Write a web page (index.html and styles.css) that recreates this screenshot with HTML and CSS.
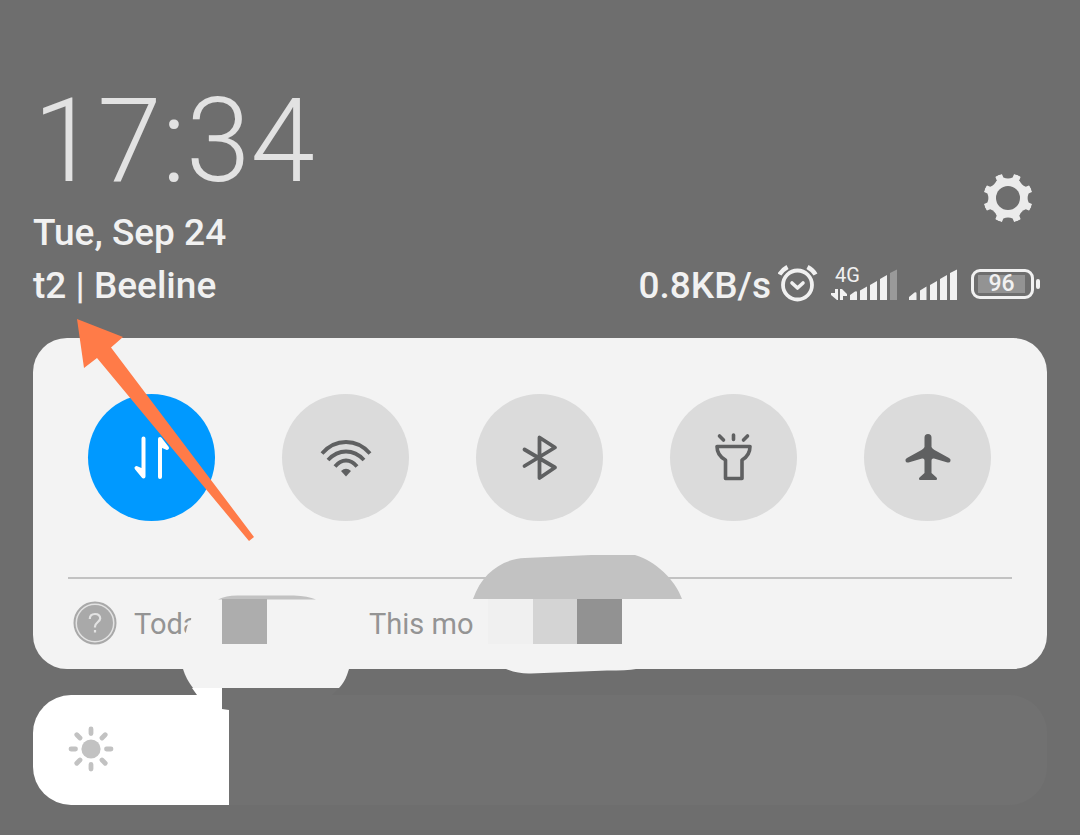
FILE: index.html
```
<!DOCTYPE html>
<html lang="en">
<head>
    <meta charset="UTF-8">
    <meta name="viewport" content="width=device-width, initial-scale=1">
    <title>Control center</title>
    <link rel="stylesheet" href="styles.css">
</head>
<body>
    <header class="header">
        <div class="header-top">
            <div>
                <div class="clock">17:34</div>
                <div class="date">Tue, Sep 24</div>
            </div>
            <button class="settings" type="button" aria-label="Settings">
                <svg width="50" height="50" viewBox="-25 -25 50 50">
                    <defs>
                        <path id="notch" d="M26-7L20.6-4.6Q18.6 0 20.6 4.6L26 7Z"/>
                        <mask id="gear" maskUnits="userSpaceOnUse" x="-25" y="-25" width="50" height="50">
                            <circle r="24.8" fill="#fff"/>
                            <circle r="12"/>
                            <use href="#notch"/>
                            <use href="#notch" transform="rotate(45)"/>
                            <use href="#notch" transform="rotate(90)"/>
                            <use href="#notch" transform="rotate(135)"/>
                            <use href="#notch" transform="rotate(180)"/>
                            <use href="#notch" transform="rotate(225)"/>
                            <use href="#notch" transform="rotate(270)"/>
                            <use href="#notch" transform="rotate(315)"/>
                        </mask>
                    </defs>
                    <circle r="25" fill="#ebebeb" mask="url(#gear)"/>
                </svg>
            </button>
        </div>
        <div class="status">
            <div class="carrier">t2 | Beeline</div>
            <div class="status-icons">
                <span class="speed">0.8KB/s</span>
                <svg class="alarm" width="40" height="40" viewBox="0 0 40 40" fill="none" stroke="#f1f1f1" stroke-linecap="round">
                    <circle cx="19.500" cy="21" r="14.5" stroke-width="3.8"/>
                    <path d="M14 19l5.5 5 5.5-5" stroke-width="3.6" stroke-linejoin="round"/>
                    <path d="M1.500 10.500Q4 6 9.500 3M37.500 10.500Q35 6 29.500 3" stroke-width="4.400" stroke-linecap="butt"/>
                </svg>
                <svg class="signal-4g" width="67" height="40" viewBox="0 0 67 40" fill="#f1f1f1">
                    <text class="network" x="4" y="18">4G</text>
                    <path d="M4 25h3v11H6L0 31v-2h4zM9 36V25h2l5 5v2h-4v4z"/>
                    <path d="M19 31l5-3.500q2-1 2 1V36h-7zM29 26.500l7-4V36h-7zM39 21l7-4v19h-7zM49 15l7-4v25h-7z"/>
                    <path d="M59 9l7-3.500V36h-7z" fill="#9a9a9a"/>
                </svg>
                <svg class="signal" width="48" height="40" viewBox="0 0 48 40" fill="#f1f1f1">
                    <path d="M0 33l5.500-4.500q2-1 2 1V36H0zM11 26.500l6.500-4V36H11zM21 21l7-4v19h-7zM31 15l7-4v25h-7zM41 9l7-3.500V36h-7z"/>
                </svg>
                <div class="battery"><span class="battery-level">96</span></div>
            </div>
        </div>
    </header>

    <main>
        <section class="panel">
            <div class="toggles">
                <button class="toggle toggle-on" type="button" aria-label="Mobile data">
                    <svg width="56" height="56" viewBox="0 0 56 56" fill="none" stroke="#fff" stroke-width="4" stroke-linecap="round" stroke-linejoin="round">
                        <path d="M19.500 8.500v38l-7-8.500 7 3M36 47V9l7 9-7-3"/>
                    </svg>
                </button>
                <button class="toggle" type="button" aria-label="Wi-Fi">
                    <svg width="56" height="56" viewBox="0 0 56 56" fill="none" stroke="#5f6061" stroke-width="3.8">
                        <path d="M4 23.500Q14 12 28 12T52 23.500M10 30Q18 21.500 28 21.500T46 30M17 36.500Q22 30.500 28 30.500T39 36.500"/>
                        <path d="M28 46.500l-5-5.500q5-4.500 10 0z" fill="#5f6061" stroke="none"/>
                    </svg>
                </button>
                <button class="toggle" type="button" aria-label="Bluetooth">
                    <svg width="56" height="56" viewBox="0 0 56 56" fill="none" stroke="#5f6061" stroke-width="3.800" stroke-linecap="round" stroke-linejoin="round">
                        <path d="M12.500 19.500L43 37.500 27.500 48V7.500L43 17.500 12.500 36"/>
                    </svg>
                </button>
                <button class="toggle" type="button" aria-label="Flashlight">
                    <svg width="56" height="56" viewBox="0 0 56 56" fill="none" stroke="#5f6061" stroke-width="3.600" stroke-linecap="round" stroke-linejoin="round">
                        <path d="M11 16.500h33q0 9-8 13.500v18.500H19.500V30q-8.500-4.500-8.500-13.500z"/>
                        <path d="M27.500 5v4.500M13.500 6l4 4M41.500 6l-4 4"/>
                    </svg>
                </button>
                <button class="toggle" type="button" aria-label="Airplane mode">
                    <svg width="56" height="56" viewBox="0 0 56 56" fill="#5f6061">
                        <path d="M24.500 7.500a3.500 3.500 0 0 1 7 0V17q1 2 3 3l14.500 8q2 1 1.500 3t-3 1.500L34 28.500q-2.500-.5-2.500 2V43l5 4.500q1.500 2.500-1 2.500h-15q-2.500 0-1-2.500l5-4.500V30.500q0-2.500-2.500-2L8.500 32.500q-2.500.5-3-1.500T7 28l14.500-8q2-1 3-3z"/>
                    </svg>
                </button>
            </div>
            <div class="usage">
                <svg class="usage-icon" width="44" height="44" viewBox="0 0 44 44">
                    <circle cx="22" cy="22" r="20.500" fill="#e3e3e3" stroke="#a9a9a9" stroke-width="2"/>
                    <circle cx="22" cy="22" r="18" fill="#a9a9a9"/>
                    <path d="M16.800 18q0-5 5.200-5t5.200 4.600c0 3-5.200 4-5.200 7.900v1M22 29v2.500" fill="none" stroke="#e3e3e3" stroke-width="2.200"/>
                </svg>
                <span class="usage-today">Toda</span>
                <span>This mo</span>
            </div>

            <!-- covered usage values -->
            <svg class="cover cover-today" width="170" height="120" viewBox="0 0 170 120">
                <path d="M10 14L35 6h100v67H1V46L4 36Q5 28 9 24z" fill="#f3f3f3"/>
                <path d="M1 73h166l-2 6q-3 8-8 13H11Q4 83 1 73z" fill="#f3f3f3"/>
                <path d="M10 92h30v23H22L15 99z" fill="#fff"/>
                <path d="M40 92h117l-7 7H47v15l-7-1z" fill="#717171"/>
                <path d="M36 3.500Q44-.5 55-.5H112Q126 0 134 3.500z" fill="#c2c2c2"/>
                <path d="M40 3h45v45H40z" fill="#adadad"/>
            </svg>
            <svg class="cover cover-month" width="210" height="120" viewBox="0 0 210 120">
                <path d="M0 44C9 18 29 4 52 3L118 0h44C182 6 202 24 209 44z" fill="#c2c2c2"/>
                <path d="M15 44h45v45H15z" fill="#f0f0f0"/>
                <path d="M60 44h44v45H60z" fill="#d4d4d4"/>
                <path d="M104 44h45v45h-45z" fill="#929292"/>
                <path d="M33 114q12 5 25 4.500l76-3q20 0 29-1.500z" fill="#f3f3f3"/>
            </svg>
            <svg class="arrow" width="180" height="224" viewBox="0 0 180 224">
                <path d="M0 0L46 18 34 28.500 177 218 172 222 20 39 7 49z" fill="#ff7b48"/>
            </svg>
        </section>

        <div class="brightness">
            <input class="brightness-range" type="range" min="0" max="1000" value="193" aria-label="Brightness">
            <svg class="sun" width="48" height="48" viewBox="-24 -24 48 48" fill="#c2c2c2" stroke="#c2c2c2" stroke-width="4.800" stroke-linecap="round">
                <circle r="9.600" stroke="none"/>
                <path d="M0-20v4.500M0 20v-4.500M-20 0h4.500M20 0h-4.500M-14.200-14.200l3.200 3.200M14.200-14.200l-3.200 3.200M-14.200 14.200l3.200-3.200M14.200 14.200l-3.200-3.200"/>
            </svg>
        </div>
    </main>
</body>
</html>
```
FILE: styles.css
```
body {
    margin: 0;
    padding: 76px 33px 30px;
    background: #6e6e6e;
    color: #f1f1f1;
    font-family: Roboto, sans-serif;
}
button {
    padding: 0;
    border: 0;
    background: none;
    cursor: pointer;
}
svg {
    display: block;
}
.header-top {
    display: flex;
    justify-content: space-between;
    align-items: flex-end;
}
.clock {
    font-size: 116px;
    font-weight: 300;
    line-height: 130px;
    color: #e2e2e2;
}
.date, .carrier, .speed {
    font-size: 37px;
    font-weight: 500;
    line-height: 53px;
    white-space: nowrap;
}
.settings {
    margin: 0 14px 36px 0;
}
.status {
    display: flex;
    justify-content: space-between;
    align-items: center;
}
.status-icons {
    display: flex;
    align-items: center;
    padding-right: 7px;
}
.status-icons svg, .battery {
    margin-bottom: 4px;
}
.alarm {
    margin: 0 13px 0 7px;
}
.signal {
    margin: 0 14px 0 11px;
}
.network {
    font-size: 20px;
}
.battery {
    position: relative;
    box-sizing: border-box;
    width: 63px;
    height: 30px;
    margin-right: 6px;
    padding: 3px 4px;
    border: 3px solid #f1f1f1;
    border-radius: 9px;
}
.battery::after {
    content: "";
    position: absolute;
    top: 7px;
    right: -9px;
    width: 4px;
    height: 10px;
    border-radius: 2px;
    background: #f1f1f1;
}
.battery-level {
    display: block;
    width: 47px;
    background: #939393;
    font-size: 23px;
    font-weight: 500;
    line-height: 18px;
    text-align: center;
}
.panel {
    position: relative;
    margin-top: 26px;
    border-radius: 34px;
    background: #f3f3f3;
}
.toggles {
    display: flex;
    justify-content: space-between;
    padding: 56px 56px 56px 55px;
}
.toggle {
    display: flex;
    align-items: center;
    justify-content: center;
    width: 127px;
    height: 127px;
    border-radius: 50%;
    background: #dbdbdb;
}
.toggle-on {
    background: #0099ff;
}
.usage {
    display: flex;
    align-items: center;
    height: 90px;
    margin: 0 35px;
    padding-left: 5px;
    border-top: 2px solid #c2c2c2;
    color: #949494;
    font-size: 29px;
}
.usage-icon {
    margin: 0 17px 2px 0;
}
.usage-today {
    width: 235px;
}
.cover, .arrow {
    position: absolute;
    overflow: visible;
    pointer-events: none;
}
.cover {
    z-index: 1;
}
.cover-today {
    top: 258px;
    left: 149px;
}
.cover-month {
    top: 217px;
    left: 440px;
}
.arrow {
    top: -19px;
    left: 44px;
}
.brightness {
    position: relative;
    margin-top: 26px;
}
.brightness-range {
    display: block;
    appearance: none;
    width: 100%;
    height: 110px;
    margin: 0;
    border-radius: 38px;
    background: linear-gradient(to right, #fff 19.3%, #717171 19.3%);
}
.brightness-range::-webkit-slider-thumb {
    appearance: none;
    width: 1px;
    height: 110px;
}
.sun {
    position: absolute;
    top: 30px;
    left: 34px;
    pointer-events: none;
}
```
